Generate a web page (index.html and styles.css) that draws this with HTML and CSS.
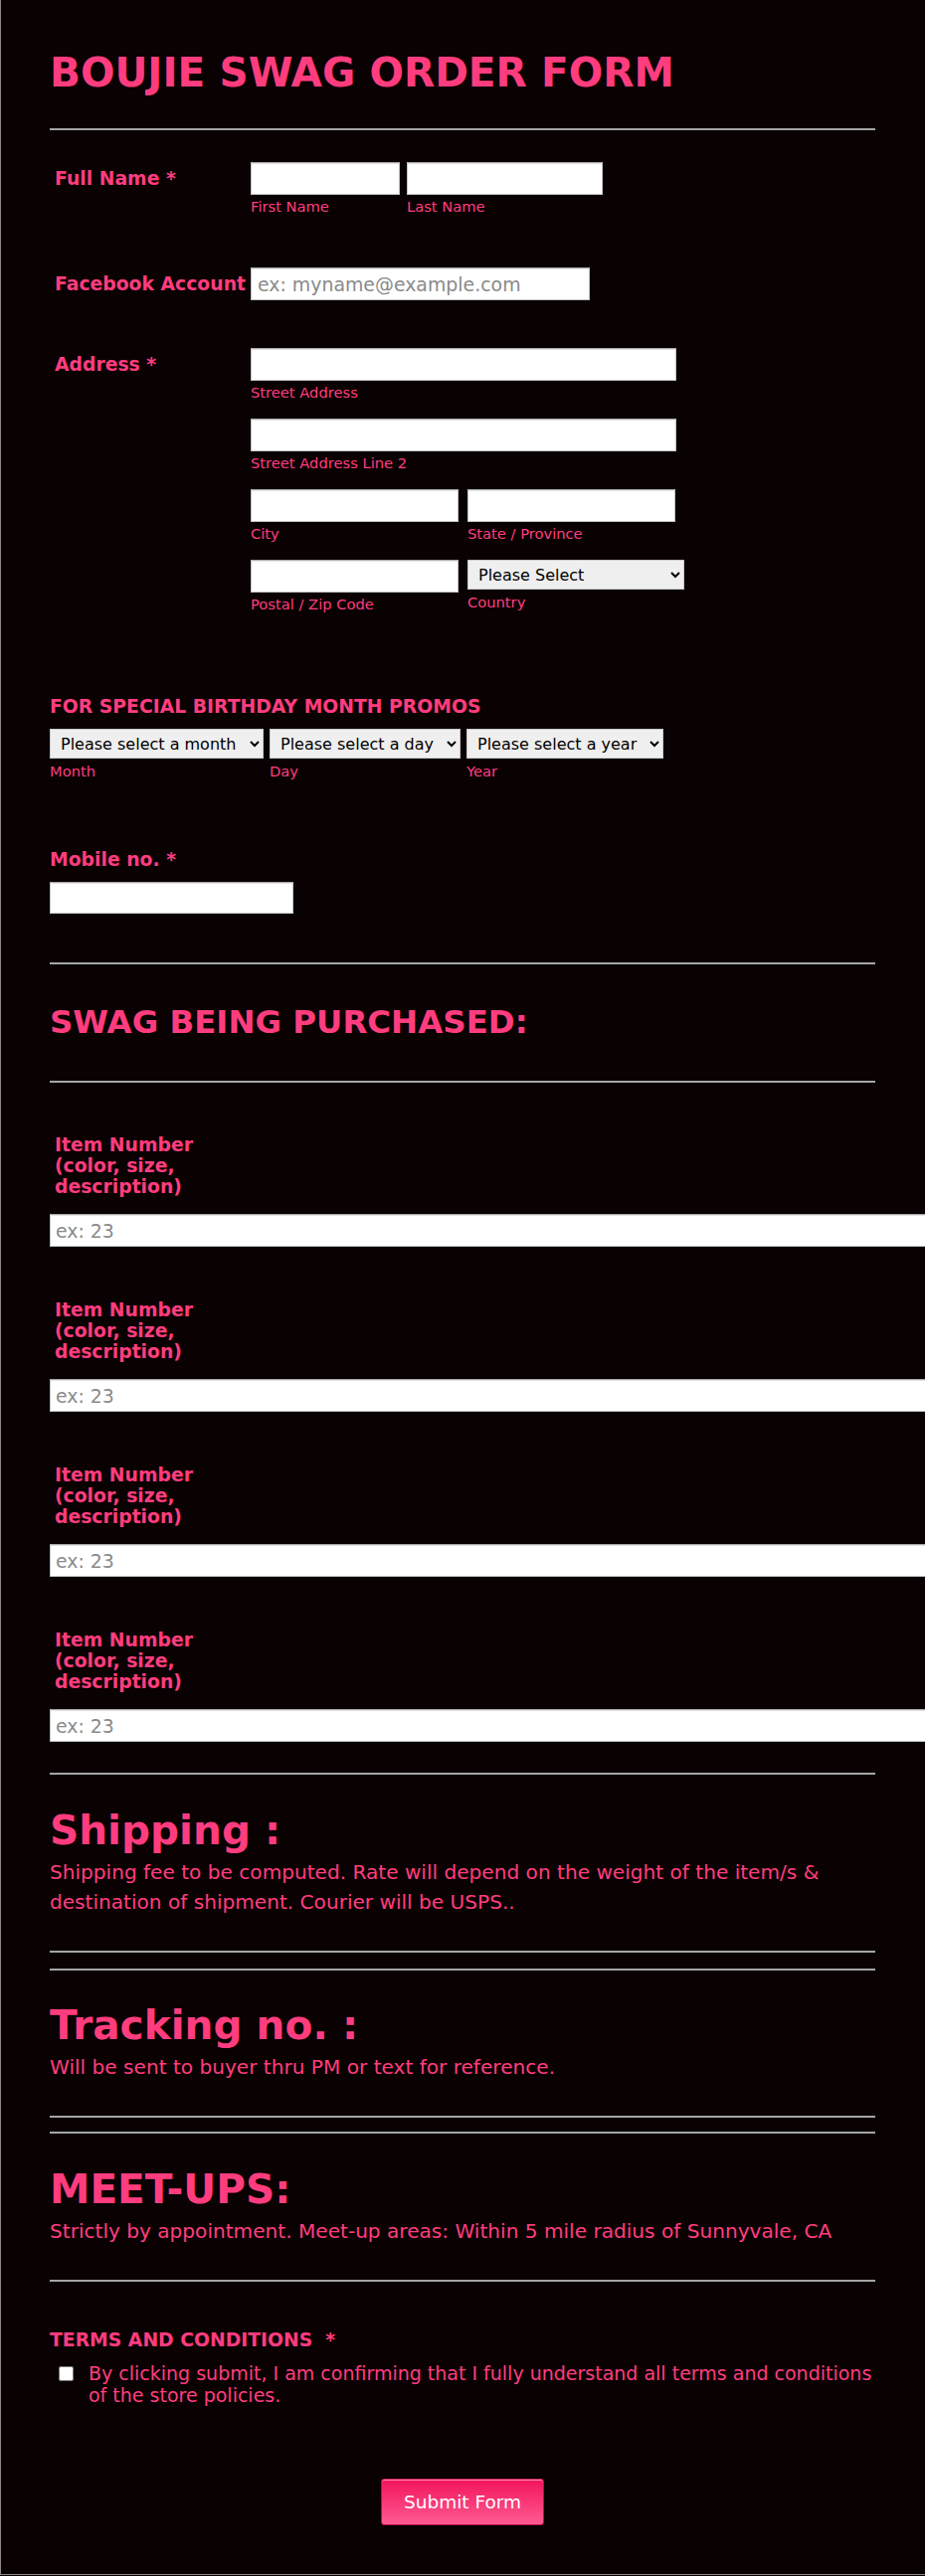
FILE: index.html
```html
<!DOCTYPE html>
<html lang="en">
<head>
    <meta charset="UTF-8">
    <meta name="viewport" content="width=device-width, initial-scale=1.0">
    <title>Boujie Swag Order Form</title>
    <link rel="stylesheet" href="styles.css">
</head>
<body>
    <div class="page">
        <form class="form" onsubmit="return false">
            <h1 class="form-title">BOUJIE SWAG ORDER FORM</h1>
            <hr class="rule rule-title">

            <div class="row row-name">
                <label class="row-label">Full Name *</label>
                <div class="fields fields-name">
                    <div class="field">
                        <input type="text" class="input w-first">
                        <span class="sub">First Name</span>
                    </div>
                    <div class="field">
                        <input type="text" class="input w-last">
                        <span class="sub">Last Name</span>
                    </div>
                </div>
            </div>

            <div class="row row-facebook">
                <label class="row-label">Facebook Account</label>
                <input type="text" class="input w-facebook" placeholder="ex: myname@example.com">
            </div>

            <div class="row row-address">
                <label class="row-label">Address *</label>
                <div class="address">
                    <div class="field">
                        <input type="text" class="input w-street">
                        <span class="sub">Street Address</span>
                    </div>
                    <div class="field">
                        <input type="text" class="input w-street">
                        <span class="sub">Street Address Line 2</span>
                    </div>
                    <div class="fields fields-pair">
                        <div class="field">
                            <input type="text" class="input w-half">
                            <span class="sub">City</span>
                        </div>
                        <div class="field">
                            <input type="text" class="input w-half">
                            <span class="sub">State / Province</span>
                        </div>
                    </div>
                    <div class="fields fields-pair">
                        <div class="field">
                            <input type="text" class="input w-half">
                            <span class="sub">Postal / Zip Code</span>
                        </div>
                        <div class="field">
                            <select class="select w-country">
                                <option>Please Select</option>
                                <option>United States</option>
                            </select>
                            <span class="sub sub-select">Country</span>
                        </div>
                    </div>
                </div>
            </div>

            <h3 class="block-label birthday-label">FOR SPECIAL BIRTHDAY MONTH PROMOS</h3>
            <div class="fields fields-date">
                <div class="field">
                    <select class="select w-month">
                        <option>Please select a month</option>
                    </select>
                    <span class="sub sub-select">Month</span>
                </div>
                <div class="field">
                    <select class="select w-day">
                        <option>Please select a day</option>
                    </select>
                    <span class="sub sub-select">Day</span>
                </div>
                <div class="field">
                    <select class="select w-year">
                        <option>Please select a year</option>
                    </select>
                    <span class="sub sub-select">Year</span>
                </div>
            </div>

            <h3 class="block-label mobile-label">Mobile no. *</h3>
            <input type="text" class="input w-mobile">

            <hr class="rule rule-mobile">
            <h2 class="section-title">SWAG BEING PURCHASED:</h2>
            <hr class="rule rule-swag">

            <div class="item">
                <label class="item-label">Item Number (color, size, description)</label>
                <input type="text" class="input w-item" placeholder="ex: 23">
            </div>
            <div class="item">
                <label class="item-label">Item Number (color, size, description)</label>
                <input type="text" class="input w-item" placeholder="ex: 23">
            </div>
            <div class="item">
                <label class="item-label">Item Number (color, size, description)</label>
                <input type="text" class="input w-item" placeholder="ex: 23">
            </div>
            <div class="item">
                <label class="item-label">Item Number (color, size, description)</label>
                <input type="text" class="input w-item" placeholder="ex: 23">
            </div>

            <hr class="rule rule-items">
            <h2 class="info-title">Shipping :</h2>
            <p class="info-text">Shipping fee to be computed. Rate will depend on the weight of the item/s &amp; destination of shipment. Courier will be USPS..</p>
            <hr class="rule rule-after">

            <hr class="rule rule-before">
            <h2 class="info-title">Tracking no. :</h2>
            <p class="info-text">Will be sent to buyer thru PM or text for reference.</p>
            <hr class="rule rule-after">

            <hr class="rule rule-before-tight">
            <h2 class="info-title">MEET-UPS:</h2>
            <p class="info-text">Strictly by appointment. Meet-up areas: Within 5 mile radius of Sunnyvale, CA</p>
            <hr class="rule rule-after">

            <h3 class="block-label terms-label">TERMS AND CONDITIONS &nbsp;*</h3>
            <label class="check">
                <input type="checkbox" class="check-box">
                <span class="check-text">By clicking submit, I am confirming that I fully understand all terms and conditions of the store policies.</span>
            </label>

            <div class="submit-row">
                <button type="submit" class="submit">Submit Form</button>
            </div>
        </form>
    </div>
</body>
</html>
```

FILE: styles.css
```css
body {
    margin: 0;
    background-color: #0a0103;
    color: #ff3d7e;
    font-family: "DejaVu Sans", "Liberation Sans", sans-serif;
}
.page {
    box-sizing: border-box;
    height: 2590px;
    padding: 49px 0 0 49px;
    border-left: 1px solid #8a8a8a;
    border-bottom: 1px solid #8a8a8a;
    overflow: hidden;
}
.form {
    width: 830px;
}
.form-title {
    margin: 0;
    font-size: 40.6px;
    line-height: 48px;
    font-weight: bold;
}
.rule {
    height: 0;
    margin: 0;
    border: 0;
    border-top: 2px solid #a5a5a5;
}
.rule-title { margin-top: 32px; }
.rule-mobile { margin-top: 49px; }
.rule-swag { margin-top: 40px; }
.rule-items { margin-top: 31px; }
.rule-after { margin-top: 34px; }
.rule-before { margin-top: 16px; }
.rule-before-tight { margin-top: 14px; }

/* label + fields rows */
.row {
    display: flex;
    align-items: flex-start;
}
.row-name { margin-top: 32px; }
.row-facebook { margin-top: 52px; }
.row-address { margin-top: 48px; }
.row-label {
    flex: none;
    width: 197px;
    padding-left: 5px;
    font-size: 18.8px;
    line-height: 33px;
    font-weight: bold;
    white-space: nowrap;
}
.fields {
    display: flex;
}
.fields-name { gap: 7px; }
.fields-pair { gap: 9px; }
.fields-date { gap: 6px; margin-top: 11px; }
.field {
    display: flex;
    flex-direction: column;
}
.address {
    display: flex;
    flex-direction: column;
    gap: 17px;
}
.sub {
    margin-top: 3px;
    font-size: 14.7px;
    line-height: 18px;
}
.sub-select {
    margin-top: 4px;
}

/* inputs */
.input {
    box-sizing: border-box;
    height: 33px;
    margin: 0;
    padding: 0 6px;
    border: 1px solid #c4c4c4;
    border-top-color: #a9a9a9;
    background: #fff;
    box-shadow: inset 0 1px 1px #e2e2e2;
    font-family: "DejaVu Sans", sans-serif;
    font-size: 18.9px;
    color: #333;
}
.input::placeholder {
    color: #8a8a8a;
}
.w-first { width: 150px; }
.w-last { width: 197px; }
.w-facebook { width: 341px; }
.w-street { width: 428px; }
.w-half { width: 209px; }
.w-mobile { width: 245px; height: 32px; margin-top: 11px; }
.w-item { width: 900px; padding-left: 5px; }

.select {
    box-sizing: border-box;
    height: 30px;
    margin: 0;
    padding: 0 4px 0 6px;
    border: 1px solid #c8c8c8;
    background-color: #efefef;
    font-family: "DejaVu Sans", sans-serif;
    font-size: 16px;
    color: #000;
}
.w-country { width: 218px; }
.w-month { width: 215px; }
.w-day { width: 192px; }
.w-year { width: 198px; }

/* standalone labels */
.block-label {
    margin: 0;
    font-size: 18.8px;
    line-height: 22px;
    font-weight: bold;
}
.birthday-label { margin-top: 83px; }
.mobile-label { margin-top: 69px; }
.terms-label { margin-top: 48px; }

.section-title {
    margin: 39px 0 0;
    font-size: 32.4px;
    line-height: 38px;
    font-weight: bold;
}

/* items */
.item {
    display: flex;
    flex-direction: column;
    align-items: flex-start;
    margin-top: 53px;
}
.rule-swag + .item { margin-top: 52px; }
.item-label {
    width: 150px;
    padding-left: 5px;
    margin-bottom: 17px;
    font-size: 18.8px;
    line-height: 21px;
    font-weight: bold;
}

/* info blocks */
.info-title {
    margin: 32px 0 0;
    font-size: 40.6px;
    line-height: 48px;
    font-weight: bold;
}
.rule-before + .info-title { margin-top: 31px; }
.info-text {
    margin: 3px 0 0;
    font-size: 20.1px;
    line-height: 30px;
}

/* terms */
.check {
    display: flex;
    align-items: flex-start;
    margin-top: 11px;
}
.check-box {
    flex: none;
    width: 15px;
    height: 15px;
    margin: 4px 15px 0 9px;
}
.check-text {
    font-size: 19px;
    line-height: 22px;
}

.submit-row {
    display: flex;
    justify-content: center;
    margin-top: 73px;
}
.submit {
    width: 164px;
    height: 47px;
    border: 1px solid #b80f47;
    border-radius: 3px;
    background: linear-gradient(#f2145b, #ff5a92);
    box-shadow: inset 0 1px 0 #ff8fb4;
    color: #fff;
    font-family: "DejaVu Sans", sans-serif;
    font-size: 18.5px;
    cursor: pointer;
}
```
